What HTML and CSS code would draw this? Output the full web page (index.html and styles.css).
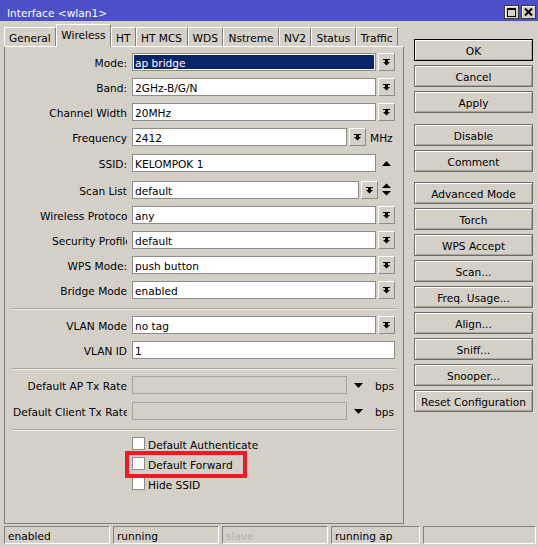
FILE: index.html
```html
<!DOCTYPE html>
<html>
<head>
<meta charset="utf-8">
<title>Interface wlan1</title>
<link rel="stylesheet" href="styles.css">
</head>
<body>
<div class="window">
  <div class="titlebar">
    <span class="title">Interface &lt;wlan1&gt;</span>
    <div class="tbtns">
      <span class="tbtn"><svg width="9" height="9" viewBox="0 0 9 9"><rect x="0.5" y="0.5" width="8" height="8" fill="none" stroke="#000"/><rect x="0" y="0" width="9" height="2" fill="#000"/></svg></span>
      <span class="tbtn"><svg width="9" height="8" viewBox="0 0 9 8"><path d="M1 0.5 L8 7.5 M8 0.5 L1 7.5" stroke="#000" stroke-width="2" fill="none"/></svg></span>
    </div>
  </div>
  <div class="main">
    <div class="left">
      <div class="tabs">
        <div class="tab">General</div>
        <div class="tab active">Wireless</div>
        <div class="tab">HT</div>
        <div class="tab">HT MCS</div>
        <div class="tab">WDS</div>
        <div class="tab">Nstreme</div>
        <div class="tab">NV2</div>
        <div class="tab">Status</div>
        <div class="tab">Traffic</div>
      </div>
      <div class="panel">
        <div class="row">
          <div class="lbl">Mode:</div>
          <div class="field sel"><span>ap bridge</span></div>
          <div class="dd"><svg width="7" height="7" viewBox="0 0 7 7"><rect x="0" y="0" width="7" height="1"/><rect x="2" y="1" width="3" height="2"/><polygon points="0,3 7,3 3.5,6.6"/></svg></div>
        </div>
        <div class="row">
          <div class="lbl">Band:</div>
          <div class="field">2GHz-B/G/N</div>
          <div class="dd"><svg width="7" height="7" viewBox="0 0 7 7"><rect x="0" y="0" width="7" height="1"/><rect x="2" y="1" width="3" height="2"/><polygon points="0,3 7,3 3.5,6.6"/></svg></div>
        </div>
        <div class="row">
          <div class="lbl clip-cw">Channel Width</div>
          <div class="field">20MHz</div>
          <div class="dd"><svg width="7" height="7" viewBox="0 0 7 7"><rect x="0" y="0" width="7" height="1"/><rect x="2" y="1" width="3" height="2"/><polygon points="0,3 7,3 3.5,6.6"/></svg></div>
        </div>
        <div class="row">
          <div class="lbl">Frequency</div>
          <div class="field">2412</div>
          <div class="dd"><svg width="7" height="7" viewBox="0 0 7 7"><rect x="0" y="0" width="7" height="1"/><rect x="2" y="1" width="3" height="2"/><polygon points="0,3 7,3 3.5,6.6"/></svg></div>
          <div class="unit mhz">MHz</div>
        </div>
        <div class="row r-ssid">
          <div class="lbl">SSID:</div>
          <div class="field">KELOMPOK 1</div>
          <div class="slot s-ssid"><svg width="9" height="5" viewBox="0 0 9 5"><polygon points="0,5 9,5 4.5,0"/></svg></div>
        </div>
        <div class="row r-scan">
          <div class="lbl">Scan List</div>
          <div class="field">default</div>
          <div class="dd"><svg width="7" height="7" viewBox="0 0 7 7"><rect x="0" y="0" width="7" height="1"/><rect x="2" y="1" width="3" height="2"/><polygon points="0,3 7,3 3.5,6.6"/></svg></div>
          <div class="slot s-scan"><svg width="9" height="14" viewBox="0 0 9 14"><polygon points="0,5 9,5 4.5,0.5"/><polygon points="0,8 9,8 4.5,12.5"/></svg></div>
        </div>
        <div class="row">
          <div class="lbl clip-wp">Wireless Protocol</div>
          <div class="field">any</div>
          <div class="dd"><svg width="7" height="7" viewBox="0 0 7 7"><rect x="0" y="0" width="7" height="1"/><rect x="2" y="1" width="3" height="2"/><polygon points="0,3 7,3 3.5,6.6"/></svg></div>
        </div>
        <div class="row">
          <div class="lbl clip-sp">Security Profile</div>
          <div class="field">default</div>
          <div class="dd"><svg width="7" height="7" viewBox="0 0 7 7"><rect x="0" y="0" width="7" height="1"/><rect x="2" y="1" width="3" height="2"/><polygon points="0,3 7,3 3.5,6.6"/></svg></div>
        </div>
        <div class="row">
          <div class="lbl">WPS Mode:</div>
          <div class="field">push button</div>
          <div class="dd"><svg width="7" height="7" viewBox="0 0 7 7"><rect x="0" y="0" width="7" height="1"/><rect x="2" y="1" width="3" height="2"/><polygon points="0,3 7,3 3.5,6.6"/></svg></div>
        </div>
        <div class="row">
          <div class="lbl">Bridge Mode</div>
          <div class="field">enabled</div>
          <div class="dd"><svg width="7" height="7" viewBox="0 0 7 7"><rect x="0" y="0" width="7" height="1"/><rect x="2" y="1" width="3" height="2"/><polygon points="0,3 7,3 3.5,6.6"/></svg></div>
        </div>

        <div class="sep"></div>

        <div class="row">
          <div class="lbl">VLAN Mode</div>
          <div class="field">no tag</div>
          <div class="dd"><svg width="7" height="7" viewBox="0 0 7 7"><rect x="0" y="0" width="7" height="1"/><rect x="2" y="1" width="3" height="2"/><polygon points="0,3 7,3 3.5,6.6"/></svg></div>
        </div>
        <div class="row">
          <div class="lbl">VLAN ID</div>
          <div class="field">1</div>
        </div>

        <div class="sep"></div>

        <div class="row">
          <div class="lbl">Default AP Tx Rate</div>
          <div class="field off"></div>
          <div class="slot s-rate"><svg width="9" height="5" viewBox="0 0 9 5"><polygon points="0,0 9,0 4.5,5"/></svg></div>
          <div class="unit bps">bps</div>
        </div>
        <div class="row r-client">
          <div class="lbl">Default Client Tx Rate</div>
          <div class="field off"></div>
          <div class="slot s-rate"><svg width="9" height="5" viewBox="0 0 9 5"><polygon points="0,0 9,0 4.5,5"/></svg></div>
          <div class="unit bps">bps</div>
        </div>

        <div class="sep"></div>

        <div class="checks">
          <div class="check"><span class="box"></span><span class="ctext">Default Authenticate</span></div>
          <div class="check"><span class="box"></span><span class="ctext">Default Forward</span></div>
          <div class="check"><span class="box"></span><span class="ctext">Hide SSID</span></div>
        </div>
      </div>
    </div>
    <div class="buttons">
      <div class="btn default">OK</div>
      <div class="btn">Cancel</div>
      <div class="btn">Apply</div>
      <div class="btn grp1">Disable</div>
      <div class="btn">Comment</div>
      <div class="btn grp2">Advanced Mode</div>
      <div class="btn">Torch</div>
      <div class="btn">WPS Accept</div>
      <div class="btn">Scan...</div>
      <div class="btn">Freq. Usage...</div>
      <div class="btn">Align...</div>
      <div class="btn">Sniff...</div>
      <div class="btn">Snooper...</div>
      <div class="btn">Reset Configuration</div>
    </div>
  </div>
  <div class="status">
    <div class="cell c-a">enabled</div>
    <div class="cell c-b">running</div>
    <div class="cell c-c dim">slave</div>
    <div class="cell c-d">running ap</div>
    <div class="cell c-e"></div>
  </div>
  <div class="mark"></div>
</div>
</body>
</html>
```

FILE: styles.css
```css
* { box-sizing: border-box; }
html, body { margin: 0; padding: 0; }
body {
  background: #d4d0c8;
  font-family: "DejaVu Sans", "Noto Sans", sans-serif;
  font-size: 10.6px;
  color: #000;
  overflow: hidden;
}
.window {
  position: relative;
  width: 538px;
  height: 547px;
  overflow: hidden;
  background: #d4d0c8;
}

/* title bar */
.titlebar {
  height: 21px;
  background: #4b50c8;
  display: flex;
  justify-content: space-between;
  align-items: flex-start;
}
.title {
  color: #fff;
  padding: 7px 0 0 7px;
  line-height: 13px;
  white-space: nowrap;
}
.tbtns {
  display: flex;
  gap: 2px;
  padding-top: 5px;
  padding-right: 2px;
}
.tbtn {
  width: 15px;
  height: 14px;
  border: 1px solid #3a3a3a;
  background: #d4d0c8;
  box-shadow: inset 1px 1px #ffffff;
  display: flex;
  align-items: center;
  justify-content: center;
}

/* main area */
.main {
  display: flex;
  align-items: flex-start;
}
.left {
  width: 400px;
  margin-left: 4px;
  padding-top: 3px;
  flex: none;
}
.tabs {
  display: flex;
  height: 22px;
  align-items: flex-end;
  position: relative;
  z-index: 1;
}
.tab {
  height: 19px;
  padding: 1px 4.5px 0 4px;
  display: flex;
  align-items: center;
  border-top: 1px solid #ffffff;
  border-left: 1px solid #ffffff;
  border-right: 1px solid #808080;
  white-space: nowrap;
  background: #d4d0c8;
}
.tab.active {
  height: 23px;
  margin-bottom: -1px;
  padding-top: 0;
  padding-bottom: 2px;
}
.panel {
  height: 478px;
  border: 1px solid #808080;
  border-top-color: #ffffff;
  padding: 6px 8px 0 8px;
}

/* form rows */
.row {
  display: flex;
  align-items: center;
  height: 18px;
}
.row + .row { margin-top: 7px; }
.row.r-ssid { margin-top: 8px; }
.row.r-scan { margin-top: 9px; }
.row.r-client { margin-top: 8px; }

.lbl {
  flex: none;
  width: 114px;
  height: 18px;
  line-height: 18px;
  padding-top: 1px;
  margin-right: 5px;
  text-align: right;
  white-space: nowrap;
  overflow: hidden;
}
.lbl.clip-cw { width: 78px; margin-left: 36px; }
.lbl.clip-wp { width: 87px; margin-left: 27px; }
.lbl.clip-sp { width: 75px; margin-left: 39px; }

.field {
  flex: 1;
  min-width: 0;
  height: 18px;
  border: 1px solid #8c8c8c;
  background: #ffffff;
  padding: 2px 2px 0;
  display: flex;
  align-items: center;
  white-space: nowrap;
  overflow: hidden;
}
.field.sel { padding: 1px; }
.field.sel span {
  flex: 1;
  align-self: stretch;
  background: #0a246a;
  color: #ffffff;
  padding: 2px 0 0 1px;
  display: flex;
  align-items: center;
}
.field.off {
  background: transparent;
  border-color: #a8a49c;
}

.dd {
  flex: none;
  width: 17px;
  height: 18px;
  margin-left: 2px;
  border: 1px solid;
  border-color: #ffffff #8c8c8c #8c8c8c #ffffff;
  display: flex;
  align-items: center;
  justify-content: center;
}
.unit { flex: none; white-space: nowrap; padding-top: 2px; }
.unit.mhz { width: 29px; padding-left: 4px; }
.unit.bps { width: 26px; padding-left: 6px; }

.slot {
  flex: none;
  display: flex;
  align-items: center;
  justify-content: center;
}
.slot.s-ssid { width: 19px; padding-left: 2px; }
.slot.s-scan { width: 17px; }
.slot.s-rate { width: 22px; }

.sep {
  height: 2px;
  border-top: 1px solid #a8a49c;
  border-bottom: 1px solid #f4f2ee;
  margin: 9px 0 6px;
}

/* checkboxes */
.checks {
  margin-left: 119px;
  display: flex;
  flex-direction: column;
  gap: 7px;
}
.check {
  display: flex;
  align-items: center;
  height: 13px;
  white-space: nowrap;
}
.ctext { padding-top: 2px; }
.box {
  width: 13px;
  height: 13px;
  border: 1px solid #8c8c8c;
  background: #ffffff;
  margin-right: 3px;
  flex: none;
}

/* right buttons */
.buttons {
  flex: none;
  width: 119px;
  margin-left: 10px;
  padding-top: 18px;
  display: flex;
  flex-direction: column;
  gap: 4px;
}
.btn {
  height: 22px;
  padding-top: 2px;
  border: 1px solid #6e6c68;
  box-shadow: inset 1px 1px #ffffff, inset -1px -1px #a8a49c;
  display: flex;
  align-items: center;
  justify-content: center;
  white-space: nowrap;
}
.btn.default { border-color: #000000; }
.btn.grp1 { margin-top: 7px; }
.btn.grp2 { margin-top: 6px; }

/* status bar */
.status {
  display: flex;
  gap: 3px;
  margin: 2px 0 0 4px;
}
.cell {
  height: 18px;
  border: 1px solid;
  border-color: #808080 #ffffff #ffffff #808080;
  padding: 2px 0 0 3px;
  display: flex;
  align-items: center;
  white-space: nowrap;
}
.c-a, .c-b, .c-c { width: 106px; }
.c-d { width: 89px; }
.c-e { width: 113px; }
.cell.dim { color: #b4b0a8; }

/* annotation */
.mark {
  position: absolute;
  left: 125px;
  top: 451px;
  width: 122px;
  height: 27px;
  border: 4px solid #ec1c24;
}
```
